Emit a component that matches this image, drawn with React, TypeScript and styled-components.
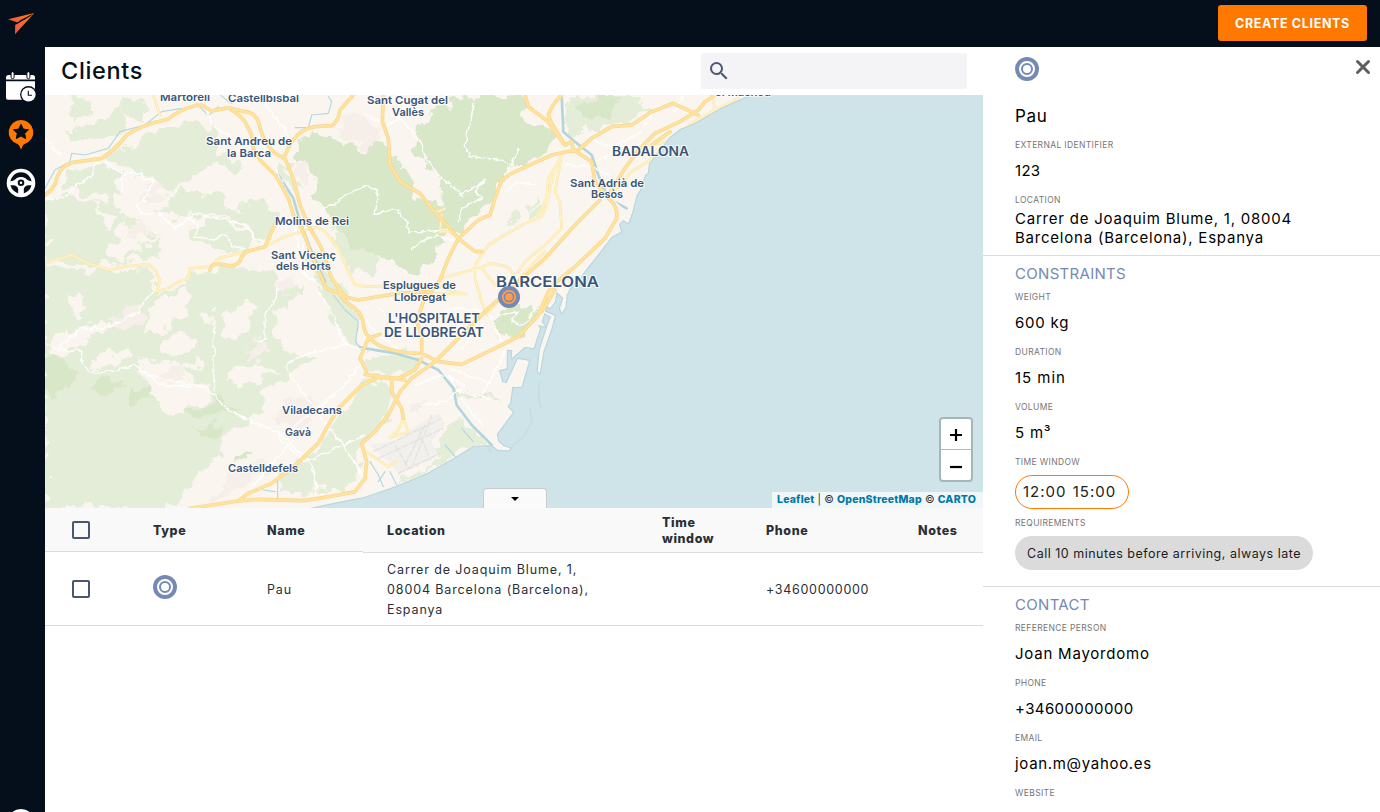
import React from 'react';
import styled, { createGlobalStyle } from 'styled-components';

const Global = createGlobalStyle`
  * { box-sizing: border-box; }
  html, body { margin: 0; padding: 0; }
  body {
    font-family: Inter, "Open Sans", sans-serif;
    background: #fff;
    color: #000;
    overflow: hidden;
  }
`;

/* ---------- shell ---------- */
const Shell = styled.div`
  width: 1380px;
  height: 812px;
  display: grid;
  grid-template: 47px 765px / 45px 938px 397px;
  overflow: hidden;
`;
const Sidebar = styled.nav`
  grid-row: 1 / 3;
  background: #040f1b;
  display: flex;
  flex-direction: column;
  align-items: center;
  overflow: hidden;
  padding-top: 11px;
`;
const NavIcon = styled.span<{ $gap?: number; $h?: number }>`
  display: block;
  flex: none;
  width: 32px;
  margin-right: 3px;
  height: ${p => p.$h ?? 32}px;
  margin-top: ${p => p.$gap ?? 0}px;
  svg { display: block; }
`;
const Account = styled.span`
  flex: none;
  width: 28px;
  height: 28px;
  margin: 610px 3px 0 0;
  border-radius: 50%;
  background: #fff;
`;
const TopBar = styled.header`
  grid-column: 2 / 4;
  background: #040f1b;
  display: flex;
  justify-content: flex-end;
  align-items: flex-start;
  padding: 5px 13px 0 0;
`;
const CreateButton = styled.button`
  width: 149px;
  height: 36px;
  padding: 1px 0 0;
  border: 0;
  border-radius: 3px;
  background: #ff7800;
  color: #fff;
  font: 700 12.5px/35px Inter, sans-serif;
  letter-spacing: 0.66px;
  white-space: nowrap;
`;
const Main = styled.main`
  display: flex;
  flex-direction: column;
  overflow: hidden;
`;
const TitleBar = styled.div`
  height: 48px;
  flex: none;
  display: flex;
  justify-content: space-between;
  padding: 6px 16px 0;
`;
const Title = styled.h1`
  margin: 0;
  font-size: 23.5px;
  line-height: 36px;
  font-weight: 500;
  letter-spacing: 0.65px;
  color: #040f1b;
`;
const Search = styled.div`
  width: 266px;
  height: 36px;
  border-radius: 2px;
  background: #f4f4f6;
  display: flex;
  align-items: center;
  padding-left: 6px;
`;

/* ---------- map ---------- */
const MapBox = styled.section`
  position: relative;
  height: 413px;
  flex: none;
  overflow: hidden;
  background: #cfe4e8;
  > svg { display: block; }
`;
const ZoomControl = styled.div`
  position: absolute;
  right: 10px;
  bottom: 26px;
  width: 34px;
  border: 2px solid rgba(0, 0, 0, 0.2);
  border-radius: 4px;
  background-clip: padding-box;
  background-color: #fff;
`;
const ZoomButton = styled.div`
  height: 30px;
  display: flex;
  align-items: center;
  justify-content: center;
  & + & { height: 31px; border-top: 1px solid #bbb; }
`;
const Attribution = styled.div`
  position: absolute;
  right: 0;
  bottom: 0;
  width: 211px;
  height: 16px;
  padding-left: 5px;
  background: rgba(255, 255, 255, 0.7);
  font-size: 10.5px;
  line-height: 15px;
  color: #333;
  white-space: nowrap;
  letter-spacing: 0.1px;
  b { color: #0078a8; font-weight: 800; letter-spacing: 0.2px; }
`;
const Handle = styled.div`
  position: absolute;
  left: 438px;
  bottom: 0;
  width: 64px;
  height: 20px;
  border: 1px solid #ccc;
  border-bottom: 0;
  border-radius: 4px 4px 0 0;
  background: #fafafa;
  display: flex;
  justify-content: center;
  padding-top: 8px;
`;

/* ---------- table ---------- */
const Row = styled.div`
  display: grid;
  grid-template-columns: 84px 114px 120px 275px 104px 152px 89px;
  flex: none;
`;
const HeadCell = styled.div<{ $short?: boolean }>`
  height: ${p => (p.$short ? 44 : 45)}px;
  padding: ${p => (p.$short ? 2 : 1)}px 24px 0;
  display: flex;
  align-items: center;
  background: #f9f9f9;
  border-bottom: 1px solid #dcdcdc;
  font-size: 12.5px;
  font-weight: 800;
  line-height: 16px;
  letter-spacing: 0.6px;
  color: #292f36;
`;
const Cell = styled.div<{ $track?: number }>`
  height: 73px;
  padding: 2px 24px 0;
  display: flex;
  align-items: center;
  border-bottom: 1px solid #dcdcdc;
  font-size: 12.5px;
  line-height: 20px;
  letter-spacing: ${p => p.$track ?? 0.88}px;
  color: #292f36;
  white-space: pre;
`;
const Check = styled.span`
  display: block;
  flex: none;
  width: 18px;
  height: 18px;
  margin: -2px 0 0 3px;
  border: 2px solid #48566f;
  border-radius: 2px;
`;
const Raise = styled.span`
  display: block;
  margin-top: -7px;
  height: 24px;
`;

/* ---------- details ---------- */
const Details = styled.aside`
  background: #fff;
  overflow: hidden;
`;
const DetailsHead = styled.div`
  display: flex;
  justify-content: space-between;
  height: 57px;
  padding: 10px 9px 0 32px;
`;
const CloseIcon = styled.svg`
  margin-top: 2px;
`;
const Section = styled.section<{ $top?: number; $bottom?: number }>`
  padding: ${p => p.$top ?? 0}px 0 ${p => p.$bottom ?? 0}px 32px;
  border-bottom: 1px solid #dcdcdc;
`;
const Name = styled.div`
  font-size: 17px;
  line-height: 24px;
  letter-spacing: 0.7px;
  margin-bottom: 11px;
`;
const SectionTitle = styled.h2`
  margin: 0 0 8px;
  font-size: 15px;
  font-weight: 400;
  line-height: 19px;
  letter-spacing: 0.3px;
  color: #748ab4;
`;
const Label = styled.div`
  height: 12px;
  font-size: 8.5px;
  line-height: 13px;
  letter-spacing: 0.36px;
  color: #757575;
  text-transform: uppercase;
`;
const Value = styled.div<{ $tight?: boolean; $track?: number }>`
  margin: ${p => (p.$tight ? '3px 0 8px' : '10px 0 14px')};
  font-size: 15px;
  line-height: 19px;
  letter-spacing: ${p => p.$track ?? 0.78}px;
  white-space: pre-line;
`;
const TimePill = styled.div`
  width: 114px;
  height: 34px;
  margin: 7px 0 8px;
  padding-left: 7px;
  border: 1px solid #ff7800;
  border-radius: 17px;
  font-size: 15px;
  line-height: 32px;
  letter-spacing: 1px;
  word-spacing: 1px;
  color: #222;
  white-space: nowrap;
`;
const NotePill = styled.div`
  width: 298px;
  height: 34px;
  margin-top: 7px;
  padding: 1px 0 0 12px;
  border-radius: 17px;
  background: #dbdbdb;
  font-size: 12.5px;
  line-height: 34px;
  letter-spacing: 0.5px;
  color: #1c1c1c;
  white-space: nowrap;
`;

const Target = () => (
  <svg width="24" height="24" viewBox="0 0 24 24">
    <circle cx="12" cy="12" r="12" fill="#748ab4" />
    <circle cx="12" cy="12" r="7" fill="#748ab4" stroke="#fff" strokeWidth="2" />
    <circle cx="12" cy="12" r="4" fill="#fff" />
  </svg>
);

type FieldProps = { label: string; value: string; tight?: boolean; track?: number };
const Field = ({ label, value, tight, track }: FieldProps) => (
  <>
    <Label>{label}</Label>
    <Value $tight={tight} $track={track}>{value}</Value>
  </>
);

/* Map geometry is drawn in units of a third of a pixel. */
const LAND =
  'M0,0H2115L2050,28L2025,40L1955,80L1905,102L1875,125L1835,175L1812,205L1808,235L1800,240L1785,285L1775,300L1762,350L1750,385L1735,375L1722,388L1728,410L1700,425L1685,445L1650,490L1618,530L1605,548L1575,580L1565,600L1562,635L1550,655L1545,640L1555,610L1535,590L1530,620L1515,640L1505,632L1500,650L1530,662L1518,705L1495,770L1484,835L1478,830L1484,765L1505,700L1518,665L1498,655L1490,680L1500,695L1478,690L1485,700L1466,760L1440,755L1400,790L1402,766L1386,764L1385,820L1362,826L1372,862L1385,865L1418,792L1452,797L1430,875L1402,876L1395,925L1387,935L1404,952L1355,1018L1360,1040L1375,1053L1396,1060L1392,1066L1360,1065L1340,1050L1285,1052L1225,1090L1145,1135L1055,1172L960,1205L860,1225L790,1240L0,1240Z';

const GREENS = [
  'M290,130L345,100L400,95L430,75L480,85L520,120L520,180L580,195L560,225L480,215L420,265L370,290L330,258L300,235L240,230L225,200L180,200L210,165L260,150Z',
  'M60,215L170,215L220,240L240,300L200,310L170,290L110,300L60,270Z',
  'M0,320L60,300L140,325L200,305L240,370L300,395L340,450L345,490L240,500L120,515L0,490Z',
  'M0,520L190,530L310,520L335,590L410,580L440,530L500,520L590,520L690,520L700,620L680,720L740,770L820,780L740,830L690,900L650,960L560,1010L540,1060L440,1160L390,1240L0,1240Z',
  'M450,395L520,370L610,415L620,470L550,475L450,430Z',
  'M380,300L420,285L470,300L530,290L540,335L600,350L620,390L530,365L460,355L390,370L340,345Z',
  'M590,320L640,310L700,350L690,420L640,440L600,380Z',
  'M690,600L780,560L790,590L740,610L720,700L680,700Z',
  'M85,10L130,10L138,60L90,70L78,40Z',
  'M190,70L228,30L235,100L180,125L70,120L60,95L140,95Z',
  'M235,20L280,10L310,60L250,80L230,60Z',
  'M860,1010L950,860L1000,850L1050,860L1045,910L1000,1000L950,1040L945,1120L890,1190L710,1195L700,1130L800,1080Z',
  'M965,775L1060,775L1130,800L1080,845L970,840Z',
  'M1165,1060L1245,962L1330,1050L1250,1072L1190,1110Z',
  'M1010,1190L1150,1120L1225,1075L1200,1110L1080,1165L960,1205Z',
  'M1100,1100L1180,1045L1180,1085L1110,1115Z',
  'M1560,50L1600,0L1790,0L1810,40L1740,90L1680,95L1610,115L1560,90Z',
  'M1375,365L1400,350L1410,375L1390,390Z',
  'M1450,345L1480,320L1490,350L1450,370Z',
  'M780,450L820,470L860,560L920,600L945,640L935,750L890,720L850,640L810,560Z',
  'M1225,890L1360,910L1350,922L1240,905Z',
  'M705,200L740,210L755,290L720,260Z',
  'M850,400L960,440L1000,490L990,530L930,540L890,480Z',
];
const DARK_GREENS = [
  'M770,120L860,105L900,150L960,160L1000,125L1060,200L1110,260L1150,320L1190,330L1180,250L1120,180L1110,110L1150,60L1250,10L1420,0L1440,70L1540,110L1530,150L1470,190L1400,230L1365,260L1350,310L1290,370L1240,420L1190,420L1160,510L1110,530L1030,490L960,470L870,420L850,360L800,300L810,240L740,180Z',
  'M0,780L60,790L100,830L60,855L60,885L0,890Z',
  'M250,880L320,850L310,920L260,920Z',
  'M130,880L180,845L210,870L240,860L220,890L140,890Z',
  'M440,1005L520,990L530,1025L500,1035Z',
  'M420,960L480,930L530,910L580,930L510,960L440,965Z',
  'M1345,690L1360,650L1420,625L1480,635L1470,680L1400,730L1370,720Z',
  'M1600,20L1700,0L1740,10L1690,60L1620,80Z',
  'M590,1070L620,1060L610,1090L580,1100Z',
];
const CLEARINGS = [
  'M340,610L410,590L430,620L420,650L380,660L350,720L300,720L310,650Z',
  'M60,600L110,590L110,620L130,640L90,670L60,650Z',
  'M20,710L100,700L190,670L205,690L130,740L90,760L20,780Z',
  'M140,800L200,765L260,765L240,800L180,830L135,825Z',
  'M290,780L330,800L400,800L440,850L490,860L500,925L450,930L410,965L330,930L300,860Z',
  'M345,740L420,715L460,745L420,770L350,770Z',
  'M530,660L600,620L640,630L610,680L620,720L560,730L520,700Z',
  'M540,850L640,800L700,820L640,860L590,880Z',
  'M190,450L240,395L300,405L330,445L300,450L240,490L200,490Z',
  'M455,285L500,250L530,260L490,300Z',
  'M465,660L500,650L505,690L480,700Z',
  'M400,830L460,795L480,820L430,830Z',
  'M650,890L690,880L700,960L660,970Z',
  'M530,1030L610,1010L600,1050L520,1110Z',
  'M150,325L180,370L215,380L190,410L160,390Z',
  'M1100,255L1150,290L1150,330L1110,310Z',
  'M690,640L720,620L740,680L700,720L680,700Z',
];
const BUILT = [
  'M205,650L240,625L290,640L290,685L240,710L200,680Z',
  'M340,820L420,815L430,860L340,860Z',
  'M605,745L650,738L660,780L620,795L600,780Z',
  'M710,910L790,905L820,940L800,990L720,1010L700,960Z',
  'M540,1150L640,1090L680,1110L600,1180L500,1220Z',
  'M290,290L350,265L360,290L310,325Z',
  'M750,210L790,210L790,250L770,270Z',
  'M880,70L960,70L1010,110L980,155L910,140Z',
  'M1090,930L1150,910L1130,950L1090,955Z',
  'M245,400L290,385L320,410L280,430Z',
  'M690,570L740,550L760,570L720,600Z',
];
const MINOR = [
  'M0,310Q40,320 70,300Q90,260 140,250L150,210L175,200L215,225L240,240L260,230L290,240L300,255L325,255L305,300L300,320L275,330L290,355L340,355L390,400L440,365L450,355L530,370L600,390L630,430L660,445',
  'M440,375L460,400L450,425L500,435L540,420L560,455L600,460',
  'M0,745L50,765L110,765L110,800L140,835L200,830L270,810L310,840L350,850L420,865L480,875L510,900L540,935L600,970L670,1000L700,1010L750,1060L800,1110L815,1170L815,1200',
  'M40,770L60,740L110,700L170,700L230,680L280,650L300,610L330,590',
  'M310,840L340,870L440,875',
  'M700,580L690,610L660,660L660,730L640,740',
  'M820,590L860,650L885,710L895,740L950,765',
  'M720,810L740,850L780,900L820,955L900,1060L940,1120L955,1160',
  'M720,810L780,780L830,765L910,750',
  'M700,1020L740,1000L830,930L900,870L950,800',
  'M700,1010L710,1040L760,1080L780,1100L960,1020',
  'M620,1180L680,1110L730,1050L800,980',
  'M230,220L232,290', 'M507,700V885',
  'M480,30L500,90L580,140',
  'M660,20L690,70L720,100L730,150',
  'M0,130L30,165L50,185',
  'M830,350L850,330L870,330L900,300L960,275L1000,285L990,360L1050,340L1085,375L1090,410L1140,410L1200,405L1230,415',
  'M1290,15L1260,150L1275,185L1330,190L1400,205L1420,160L1390,230',
  'M1120,130L1140,180L1180,240L1250,300L1290,275L1320,255L1290,290L1310,310L1250,340L1240,380',
  'M1030,90L1060,70L1090,15', 'M1060,65L1120,130',
  'M780,430L760,520L830,580', 'M690,220L720,280L750,400L780,540',
  'M1380,770L1310,905', 'M1210,820L1300,850L1340,865',
  'M1210,840L1240,890L1340,915', 'M1245,910L1315,990', 'M1110,870L1190,840L1260,870L1200,920L1130,930',
  'M1330,650L1370,740', 'M1380,290L1420,260L1470,270',
  'M1100,460L1170,420L1240,440', 'M1190,650L1240,640L1320,650', 'M1170,710L1240,730L1310,690L1250,760',
  'M1000,640L1060,700L1100,740', 'M1020,700L1120,690', 'M930,640L1000,720L1060,760',
  'M1360,660L1420,650L1400,680L1440,690L1470,640',
  'M1660,200L1720,160L1830,140', 'M1640,130L1700,160L1790,110', 'M1560,210L1640,215L1690,240',
  'M1800,90L1830,40L1880,30', 'M1890,50L1905,30L1910,0', 'M960,60L1010,80',
];
const SECONDARY = [
  'M0,505L80,480L130,505L195,525L240,515L310,507L335,530L345,560L335,590L370,580L400,560L430,550L435,520L495,515L520,490L580,475L660,455L720,425L815,395L840,410L880,460L910,530L930,570L960,575L1170,570L1250,597',
  'M1555,170L1550,180L1530,290L1545,320L1550,400L1500,450L1440,500L1420,530',
  'M1540,200L1510,250L1505,310L1490,340L1475,370',
  'M1550,180L1530,220L1515,280L1505,330L1490,365L1440,385L1380,420L1330,450L1310,480L1290,510L1290,550L1310,620L1325,660',
  'M1190,550L1300,520L1340,505L1385,515L1410,540',
  'M1130,595L1265,597',
  'M1500,470L1450,520L1400,580L1330,650',
  'M1905,115L1840,180L1760,230L1700,300L1660,290',
  'M2080,10L2000,50L1940,85L1870,140L1810,150',
  'M955,1065L1030,1115L1055,1100', 'M1075,970L1060,1005L1035,1028M1075,970L1090,1010L1035,1028',
  'M1200,340L1180,350L1160,345M1190,360L1185,410L1215,410L1240,430',
  'M2000,0L2010,40M325,0L345,60', 'M1310,520L1350,570',
];
const MAJOR = [
  'M0,300Q30,280 35,250Q45,215 80,203L170,190Q210,165 245,120Q290,90 370,72Q420,32 470,30L500,48L550,38Q585,60 600,80L620,120L625,160L645,195L690,240Q710,270 730,310L745,360L770,400L800,480L835,560Q840,590 880,590Q895,620 930,640Q955,660 955,690Q960,730 1010,755Q1060,775 1120,775',
  'M550,38L600,50Q640,55 645,100Q660,150 690,175L720,190L745,250L765,330L790,390L830,460L860,550L900,605L940,615L1060,595L1150,590',
  'M715,190L740,140Q770,100 810,95L860,92Q880,80 885,45L925,0',
  'M495,525Q500,500 540,510Q580,520 590,485L605,470L660,455L675,420L692,385',
  'M1015,0L1012,80L1030,130L1035,210L1065,260L1125,295L1160,340L1240,430L1290,470L1310,470',
  'M1440,0L1450,35L1510,80L1540,125L1560,150L1580,140L1585,165L1640,200L1650,260L1690,310Q1720,335 1715,370L1680,430L1590,515L1530,565L1510,590L1480,660L1420,725L1360,755L1250,808L1180,800L1130,775L1130,720L1115,680L1135,620L1185,555L1210,490L1240,430L1300,375L1335,360L1350,310L1370,255L1400,235L1520,180L1590,165',
  'M1550,0Q1520,30 1510,60L1520,85L1560,150',
  'M1960,60L1885,25L1820,50L1760,90L1700,95L1640,130L1600,165',
  'M2040,-20L1980,20L1960,45L1905,80L1830,115L1780,165L1740,220L1690,300',
  'M1530,585L1490,650',
  'M1665,315L1590,390L1500,490L1420,560L1330,640L1260,710L1170,800L1100,850L1065,890L1030,960L990,1010L950,1045L965,1100L960,1150L930,1190L880,1200L780,1217L640,1213L580,1218L435,1240',
  'M580,1218L610,1195L680,1165L740,1120L820,1045L850,990L880,940L950,870L1000,847L1060,850L1110,825L1130,790',
  'M960,838L1080,855', 'M1005,718L970,730L945,790L965,830',
  'M1040,850L1040,890L1070,940L1075,970', 'M1875,110L1820,150',
];
const RIVERS = [
  'M1550,0L1555,110L1590,140L1640,180L1660,240L1690,310L1745,340',
  'M700,240L745,310L765,380L800,470L840,560',
  'M945,757L1050,775L1120,795L1180,825L1225,880L1235,930L1280,990L1340,1050',
];
const STREAMS = [
  'M0,280L30,225L75,200L80,175L120,180L190,160L225,110L300,90L350,50L410,40',
  'M520,-5L550,20L560,25', 'M750,98H790L800,60L850,55L860,20L850,5', 'M455,25L490,62L520,35',
  'M865,600L900,645L940,680L932,740L950,765', 'M698,1150L698,1210M655,1185L690,1190',
  'M975,1100L1000,1140L1015,1175M1000,1160L1020,1130M1035,1130L1055,1170M1250,1000L1285,1040M1200,1050L1235,1090',
];
const GRID = Array.from({ length: 11 }, (_, i) => `M${1380 + i * 27},${500 - i * 24}l${90 + i * 5},${70 + i * 7}`)
  .concat(Array.from({ length: 6 }, (_, i) => `M${1360 + i * 40},${430 + i * 22}L${1560 + i * 24},${265 + i * 22}`))
  .concat(Array.from({ length: 5 }, (_, i) => `M${1290 + i * 26},${430 + i * 5}l45,90`));

const LABELS: [string, number, number, number, number][] = [
  ['Martorell', 160, 101, 50, 11], ['Castellbisbal', 228, 102, 71, 11],
  ['Sant Cugat del', 367, 104, 81, 11], ['Vallès', 392, 115.5, 32, 11],
  ['Sant Andreu de', 206, 145, 86, 11], ['la Barca', 227, 156.5, 44, 11],
  ['Molins de Rei', 275, 224.5, 74, 11], ['Sant Vicenç', 271, 258.5, 65, 11], ['dels Horts', 276, 270, 55, 11],
  ['Sant Adrià de', 570, 186.5, 74, 11], ['Besòs', 591, 198, 32, 11],
  ['Esplugues de', 383, 289, 73, 11], ['Llobregat', 394, 300.5, 52, 11],
  ['Viladecans', 282, 413.5, 60, 11], ['Gavà', 285, 435.5, 26, 11], ['Castelldefels', 228, 472, 70, 11],
  ['BADALONA', 612, 156, 77, 12.5], ['BARCELONA', 496, 286.5, 103, 15],
  ["L'HOSPITALET", 388, 323, 92, 13], ['DE LLOBREGAT', 384, 337, 100, 13], ['el Masnou', 715, 96, 56, 11],
];

const Lines = ({ d, color, width }: { d: string[]; color: string; width: number }) => (
  <path d={d.join('')} fill="none" stroke={color} strokeWidth={width} strokeLinecap="round" strokeLinejoin="round" />
);
const Areas = ({ d, color }: { d: string[]; color: string }) => (
  <g fill={color}>{d.map(p => <path key={p} d={p} />)}</g>
);

const CityMap = () => (
  <svg width="938" height="413" viewBox="0 0 938 413">
    <defs>
      <filter id="ragged" filterUnits="userSpaceOnUse" x="-60" y="-60" width="2300" height="1400">
        <feTurbulence type="fractalNoise" baseFrequency="0.02" numOctaves="4" seed="4" />
        <feDisplacementMap in="SourceGraphic" scale="75" xChannelSelector="R" yChannelSelector="G" />
      </filter>
      <filter id="wobble" filterUnits="userSpaceOnUse" x="-60" y="-60" width="2300" height="1400">
        <feTurbulence type="fractalNoise" baseFrequency="0.05" numOctaves="2" seed="8" />
        <feDisplacementMap in="SourceGraphic" scale="18" xChannelSelector="R" yChannelSelector="G" />
      </filter>
      <clipPath id="land"><path d={LAND} /></clipPath>
    </defs>
    <g transform="scale(0.33333)">
      <path d={LAND} fill="#faf6ef" stroke="#b9d6de" strokeWidth="7" strokeLinejoin="round" />
      <path d={LAND} fill="#faf6ef" />
      <path d="M1484,860L1480,900L1488,938M1455,940L1460,980L1440,1020L1400,1055M1330,1050L1336,1075" fill="none" stroke="#c5dee4" strokeWidth="6" />
      <g clipPath="url(#land)">
        <g filter="url(#ragged)">
          <Areas d={GREENS} color="#e4edd7" />
          <Areas d={DARK_GREENS} color="#d7e7c8" />
          <Areas d={CLEARINGS} color="#faf6ef" />
          <Areas d={BUILT} color="#f6eee8" />
        </g>
        <path d="M975,1050L1060,1035L1130,980L1180,955L1200,990L1160,1040L1180,1080L1060,1140L1040,1110Z" fill="#f2f0ec" />
        <path d="M985,1070L1190,970M1000,1090L1195,1000M1060,1135L1185,1075M1080,1110L1140,990M1100,1120L1160,960M1050,1050L1090,1120M1120,1000L1150,1080" fill="none" stroke="#e3e2e1" strokeWidth="4" strokeDasharray="22 4" />
        <Lines d={STREAMS} color="#b4d8e0" width={3.5} />
        <Lines d={RIVERS} color="#b3d5dd" width={8} />
        <Lines d={GRID} color="#f1ece4" width={4} />
        <Lines d={GRID} color="#ffffff" width={2.5} />
        <g filter="url(#wobble)"><Lines d={MINOR} color="#ffffff" width={4} /></g>
        <Lines d={SECONDARY} color="#f8e2a8" width={8} />
        <Lines d={SECONDARY} color="#fff2c0" width={5.5} />
        <Lines d={MAJOR} color="#f8d48f" width={11} />
        <Lines d={MAJOR} color="#ffe29b" width={7.5} />
      </g>
    </g>
    <g transform="translate(-45 -95)" fontFamily="Inter, sans-serif" fontWeight="600" fill="#3a5577" stroke="#fff" strokeOpacity="0.75" strokeWidth="2" strokeLinejoin="round" paintOrder="stroke">
      {LABELS.map(([text, x, y, w, size]) => (
        <text key={text} x={x} y={y} textLength={w} lengthAdjust="spacingAndGlyphs" fontSize={size}>{text}</text>
      ))}
    </g>
    <circle cx="464" cy="202" r="11" fill="#748ab4" />
    <circle cx="464" cy="202" r="6.2" fill="none" stroke="#ff9d4d" strokeWidth="1.8" />
    <circle cx="464" cy="202" r="3.8" fill="#ff9d4d" />
  </svg>
);

const HEADERS = ['Type', 'Name', 'Location', 'Time\nwindow', 'Phone', 'Notes'];

export default function App() {
  return (
    <Shell>
      <Global />
      <Sidebar>
        <NavIcon $h={24}>
          <svg width="32" height="24" viewBox="5 11 32 24">
            <defs>
              <linearGradient id="logo" x1="0" y1="1" x2="1" y2="0">
                <stop offset="0" stopColor="#f2504b" />
                <stop offset="1" stopColor="#ff8412" />
              </linearGradient>
            </defs>
            <path d="M8 19.3 34.3 13 20.3 20.2 17.7 22.4Z" fill="url(#logo)" />
            <path d="M34.3 13 15 34.2 15.2 24.9 21.5 21.3 25.2 19.3Z" fill="url(#logo)" />
            <path d="M17 23.4 31.5 15" stroke="#040f1b" strokeWidth="0.9" strokeDasharray="5 1" />
          </svg>
        </NavIcon>
        <NavIcon $gap={36}>
          <svg width="32" height="32" viewBox="5 71 32 32">
            <path d="M6 79.6V77.5Q6 75 8.5 75H32.5Q35 75 35 77.5V79.6ZM6 81.2H35V99.7H8Q6 99.7 6 97.7Z" fill="#fff" />
            <rect x="11.1" y="71.7" width="3" height="7" rx="1.5" fill="#fff" stroke="#040f1b" strokeWidth="1" />
            <rect x="26.9" y="71.7" width="3" height="7" rx="1.5" fill="#fff" stroke="#040f1b" strokeWidth="1" />
            <circle cx="28.5" cy="94.5" r="8.4" fill="#040f1b" />
            <circle cx="28.5" cy="94.5" r="7.1" fill="#fff" />
            <path d="M28.3 90.8V95.3H32" fill="none" stroke="#040f1b" strokeWidth="1.1" />
          </svg>
        </NavIcon>
        <NavIcon $gap={16}>
          <svg width="32" height="32" viewBox="5 119 32 32">
            <path d="M21 120a12.2 12.2 0 0 0-3.6 23.9q1.6.6 2.3 2.6L21 149.8l1.3-3.3q.7-2 2.3-2.6A12.2 12.2 0 0 0 21 120Z" fill="#ff7800" />
            <path d="m21 124.300 2.300 4.800 5.200.7-3.800 3.600 1 5.200-4.700-2.600-4.700 2.600 1-5.200-3.800-3.600 5.200-.7Z" fill="#040f1b" stroke="#040f1b" strokeWidth="1" strokeLinejoin="round" />
          </svg>
        </NavIcon>
        <NavIcon $gap={16}>
          <svg width="32" height="32" viewBox="5 167 32 32">
            <circle cx="21" cy="183" r="12.5" fill="none" stroke="#fff" strokeWidth="3.600" />
            <path d="M9.500 181.500Q15 180.500 16.500 178.300Q21 175.800 25.500 178.300Q27 180.500 32.500 181.500V185.200H28Q24.600 185.600 23.800 189V194.500H18.200V189Q17.400 185.600 14 185.200H9.500Z" fill="#fff" />
            <circle cx="21" cy="182.800" r="3.300" fill="#040f1b" />
            <circle cx="21" cy="182.800" r="1.300" fill="#fff" />
          </svg>
        </NavIcon>
        <Account />
      </Sidebar>
      <TopBar>
        <CreateButton>CREATE CLIENTS</CreateButton>
      </TopBar>
      <Main>
        <TitleBar>
          <Title>Clients</Title>
          <Search>
            <svg width="24" height="24" viewBox="0 0 24 24" fill="#4b5774">
              <path d="M15.500 14h-.79l-.28-.27A6.471 6.471 0 0 0 16 9.500 6.500 6.500 0 1 0 9.500 16c1.610 0 3.090-.59 4.230-1.570l.27.28v.79l5 4.990L20.490 19l-4.990-5zm-6 0C7.010 14 5 11.990 5 9.500S7.010 5 9.500 5 14 7.010 14 9.500 11.990 14 9.500 14z" />
            </svg>
          </Search>
        </TitleBar>
        <MapBox>
          <CityMap />
          <ZoomControl>
            <ZoomButton>
              <svg width="12" height="14" viewBox="0 0 12 14"><path d="M6 2V14M0 8H12" stroke="#000" strokeWidth="2.200" /></svg>
            </ZoomButton>
            <ZoomButton>
              <svg width="12" height="12" viewBox="0 0 12 12"><path d="M0 8H12" stroke="#000" strokeWidth="2.200" /></svg>
            </ZoomButton>
          </ZoomControl>
          <Attribution><b>Leaflet</b> | © <b>OpenStreetMap</b> © <b>CARTO</b></Attribution>
          <Handle>
            <svg width="8" height="4" viewBox="0 0 8 4"><path d="M0 0H8L4 4Z" /></svg>
          </Handle>
        </MapBox>
        <Row>
          <HeadCell $short><Check /></HeadCell>
          {HEADERS.map((h, i) => <HeadCell key={h} $short={i < 2}>{h}</HeadCell>)}
        </Row>
        <Row>
          <Cell><Check /></Cell>
          <Cell><Raise><Target /></Raise></Cell>
          <Cell>Pau</Cell>
          <Cell>{'Carrer de Joaquim Blume, 1,\n08004 Barcelona (Barcelona),\nEspanya'}</Cell>
          <Cell />
          <Cell $track={0.7}>+34600000000</Cell>
          <Cell />
        </Row>
      </Main>
      <Details>
        <DetailsHead>
          <Target />
          <CloseIcon width="16" height="16" viewBox="0 0 16 16">
            <path d="M2.500 2.500 13.500 13.500M13.500 2.500 2.500 13.500" stroke="#5f5f5f" strokeWidth="3" strokeLinecap="round" />
          </CloseIcon>
        </DetailsHead>
        <Section>
          <Name>Pau</Name>
          <Field label="External identifier" value="123" track={0.3} />
          <Field label="Location" value={'Carrer de Joaquim Blume, 1, 08004\nBarcelona (Barcelona), Espanya'} tight />
        </Section>
        <Section $top={8} $bottom={16}>
          <SectionTitle>CONSTRAINTS</SectionTitle>
          <Field label="Weight" value="600 kg" />
          <Field label="Duration" value="15 min" track={0.95} />
          <Field label="Volume" value="5 m³" />
          <Label>Time window</Label>
          <TimePill>12:00 15:00</TimePill>
          <Label>Requirements</Label>
          <NotePill>Call 10 minutes before arriving, always late</NotePill>
        </Section>
        <Section $top={8}>
          <SectionTitle>CONTACT</SectionTitle>
          <Field label="Reference person" value="Joan Mayordomo" />
          <Field label="Phone" value="+34600000000" track={0.4} />
          <Field label="Email" value="joan.m@yahoo.es" track={0.68} />
          <Field label="Website" value="" />
        </Section>
      </Details>
    </Shell>
  );
}
